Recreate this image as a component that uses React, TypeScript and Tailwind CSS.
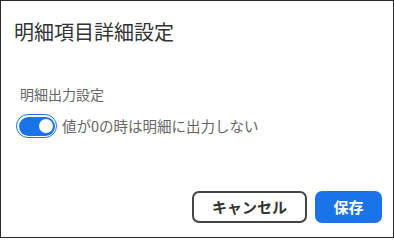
export default function App() {
  return (
    <div
      className="flex h-[238px] w-[394px] flex-col border border-[#2a2a2a] bg-white"
      style={{ fontFamily: '"Noto Sans CJK JP", "Noto Sans", sans-serif' }}
    >
      <h1 className="pl-[13px] pt-[17px] text-[20px] leading-[28px] text-[#333]">明細項目詳細設定</h1>

      <div className="mt-[38px] pl-[19px] text-[14px] leading-[20px] text-[#666]">明細出力設定</div>

      <div className="mt-[10px] flex items-center gap-[5px] pl-[15px]">
        <button
          type="button"
          role="switch"
          aria-checked="true"
          className="flex h-[24px] w-[41px] rounded-full border-[1.5px] border-[#1a73e8] p-[1.5px]"
        >
          <span className="flex h-full w-full items-center justify-end rounded-full bg-[#1a73e8] pr-[2px]">
            <span className="h-[14px] w-[14px] rounded-full bg-white" />
          </span>
        </button>
        <span className="text-[14.5px] leading-[20px] text-[#666]">値が0の時は明細に出力しない</span>
      </div>

      <div className="mt-auto flex justify-end gap-[8px] pb-[14px] pr-[11px]">
        <button
          type="button"
          className="h-[32px] w-[115px] rounded-[7px] border-2 border-[#444] text-[15px] font-bold text-[#333]"
        >
          キャンセル
        </button>
        <button
          type="button"
          className="h-[32px] w-[67px] rounded-[7px] bg-[#1a73e8] text-[15px] font-bold text-white"
        >
          保存
        </button>
      </div>
    </div>
  );
}
